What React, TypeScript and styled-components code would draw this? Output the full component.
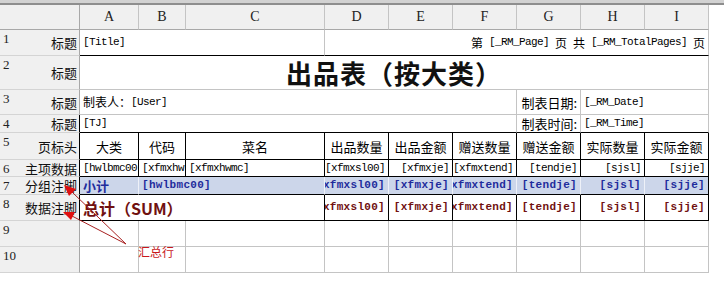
import React from 'react';
import styled, { createGlobalStyle, css } from 'styled-components';

const GlobalStyle = createGlobalStyle`
  html, body {
    margin: 0;
    padding: 0;
    background: #fff;
  }
  body {
    font-family: "Noto Sans CJK SC", "Liberation Sans", sans-serif;
    color: #000;
  }
`;

const GRID = '#c4c4c4';
const INK = '#000';
const HEAD_BG = '#f0f0f0';

// Page shell
const Page = styled.div`
  position: relative;
  width: 724px;
  height: 285px;
  overflow: hidden;
`;

const TopBar = styled.div`
  height: 3px;
  background: #d2d2d2;
  border-bottom: 2px solid #8e8e8e;
`;

const Sheet = styled.div`
  display: grid;
  width: 709px;
  grid-template-columns: 80px 59px 47px 139px repeat(6, 64px);
  grid-template-rows: 25px 26px 34px 25px 18px 27px 17px 18px 26px 26px 26px;
`;

// Header cells
const Corner = styled.div`
  box-sizing: border-box;
  background: ${HEAD_BG};
  border-right: 1px solid #a8a8a8;
  border-bottom: 1px solid #a8a8a8;
`;

const ColHead = styled.div`
  box-sizing: border-box;
  display: flex;
  align-items: center;
  justify-content: center;
  background: ${HEAD_BG};
  border-right: 1px solid ${GRID};
  border-bottom: 1px solid #a8a8a8;
  font-family: "Liberation Serif", serif;
  font-size: 14px;
  color: #222;
`;

const RowHead = styled.div<{ $strong?: boolean }>`
  box-sizing: border-box;
  position: relative;
  display: flex;
  align-items: center;
  justify-content: flex-end;
  padding-right: 2px;
  background: ${HEAD_BG};
  border-right: 1px solid ${(p) => (p.$strong ? INK : '#a8a8a8')};
  border-bottom: 1px solid #d4d4d4;
  font-size: 13px;
  line-height: 1;
  color: #111;
`;

const RowNum = styled.span`
  position: absolute;
  left: 3px;
  top: 2px;
  font-family: "Liberation Serif", serif;
  font-size: 13px;
  color: #222;
`;

// Body cells
type Align = 'left' | 'right' | 'center';

const Cell = styled.div<{
  $span?: number;
  $align?: Align;
  $right?: string;
  $bottom?: string;
  $bg?: string;
  $open?: boolean;
}>`
  box-sizing: border-box;
  display: flex;
  align-items: center;
  justify-content: ${(p) =>
    p.$align === 'right' ? 'flex-end' : p.$align === 'center' ? 'center' : 'flex-start'};
  grid-column: span ${(p) => p.$span ?? 1};
  padding: 0 3px;
  overflow: ${(p) => (p.$open ? 'visible' : 'hidden')};
  white-space: nowrap;
  line-height: 1;
  background: ${(p) => p.$bg ?? '#fff'};
  border-right: 1px solid ${(p) => p.$right ?? GRID};
  border-bottom: 1px solid ${(p) => p.$bottom ?? GRID};
  font-size: 13px;
`;

const Code = styled.span<{ $tone?: 'plain' | 'blue' | 'red' }>`
  flex-shrink: 0;
  font-family: "Liberation Mono", "DejaVu Sans Mono", monospace;
  font-size: 11px;
  letter-spacing: -0.6px;
  color: #000;
  ${(p) =>
    p.$tone === 'blue' &&
    css`
      font-weight: 700;
      letter-spacing: 0.3px;
      color: #1f2c9c;
    `}
  ${(p) =>
    p.$tone === 'red' &&
    css`
      font-weight: 700;
      letter-spacing: 0.3px;
      color: #701010;
    `}
`;

const Han = styled.span`
  font-family: "Noto Sans CJK SC", sans-serif;
  font-size: 12px;
`;

const SheetTitle = styled.span`
  font-family: "Noto Sans CJK SC", sans-serif;
  font-size: 26px;
  font-weight: 700;
  line-height: 1;
  letter-spacing: 1px;
  color: #111;
`;

const SubTotal = styled.span`
  font-weight: 700;
  color: #1f2c9c;
`;

const GrandTotal = styled.span`
  font-size: 16px;
  font-weight: 700;
  line-height: 1;
  color: #701010;
`;

// Annotation over the sheet
const Callout = styled.svg`
  position: absolute;
  left: 0;
  top: 0;
  pointer-events: none;
`;

const CalloutText = styled.span`
  position: absolute;
  left: 138px;
  top: 243px;
  font-size: 12px;
  color: #c8181c;
`;

const COLS = ['A', 'B', 'C', 'D', 'E', 'F', 'G', 'H', 'I'];
const HEADS = ['大类', '代码', '菜名', '出品数量', '出品金额', '赠送数量', '赠送金额', '实际数量', '实际金额'];
const FIELDS = ['[xfmxsl00]', '[xfmxje]', '[xfmxtend]', '[tendje]', '[sjsl]', '[sjje]'];

const App: React.FC = () => {
  return (
    <Page>
      <GlobalStyle />
      <TopBar />
      <Sheet>
        <Corner />
        {COLS.map((c) => (
          <ColHead key={c}>{c}</ColHead>
        ))}

        {/* row 1 */}
        <RowHead><RowNum>1</RowNum>标题</RowHead>
        <Cell $span={3} $bottom={INK}><Code>[Title]</Code></Cell>
        <Cell $span={6} $align="right" $bottom={INK}>
          <Han>第</Han><Code>&nbsp;[_RM_Page]&nbsp;</Code><Han>页</Han>
          <Code>&nbsp;</Code><Han>共</Han><Code>&nbsp;[_RM_TotalPages]&nbsp;</Code><Han>页</Han>
        </Cell>

        {/* row 2 */}
        <RowHead><RowNum>2</RowNum>标题</RowHead>
        <Cell $span={9} $align="center" $open>
          <SheetTitle>出品表（按大类）</SheetTitle>
        </Cell>

        {/* row 3 */}
        <RowHead><RowNum>3</RowNum>标题</RowHead>
        <Cell $span={6}><Han>制表人：</Han><Code>[User]</Code></Cell>
        <Cell $align="right">制表日期:</Cell>
        <Cell $span={2}><Code>[_RM_Date]</Code></Cell>

        {/* row 4 */}
        <RowHead $strong><RowNum>4</RowNum>标题</RowHead>
        <Cell $span={6} $bottom={INK}><Code>[TJ]</Code></Cell>
        <Cell $align="right" $bottom={INK}>制表时间:</Cell>
        <Cell $span={2} $bottom={INK}><Code>[_RM_Time]</Code></Cell>

        {/* row 5: column captions */}
        <RowHead $strong><RowNum>5</RowNum>页标头</RowHead>
        {HEADS.map((h) => (
          <Cell key={h} $align="center" $right={INK} $bottom={INK}>{h}</Cell>
        ))}

        {/* row 6: detail fields */}
        <RowHead $strong><RowNum>6</RowNum>主项数据</RowHead>
        <Cell $right={INK} $bottom={INK}><Code>[hwlbmc00]</Code></Cell>
        <Cell $right={INK} $bottom={INK}><Code>[xfmxhw]</Code></Cell>
        <Cell $right={INK} $bottom={INK}><Code>[xfmxhwmc]</Code></Cell>
        {FIELDS.map((f) => (
          <Cell key={f} $align="right" $right={INK} $bottom={INK}><Code>{f}</Code></Cell>
        ))}

        {/* row 7: group footer */}
        <RowHead $strong><RowNum>7</RowNum>分组注脚</RowHead>
        <Cell $bg="#ccd6ea" $right="#eef1f8" $bottom={INK}><SubTotal>小计</SubTotal></Cell>
        <Cell $span={2} $bg="#ccd6ea" $right="#eef1f8" $bottom={INK}>
          <Code $tone="blue">[hwlbmc00]</Code>
        </Cell>
        {FIELDS.map((f, i) => (
          <Cell
            key={f}
            $align="right"
            $bg="#ccd6ea"
            $right={i === FIELDS.length - 1 ? INK : '#eef1f8'}
            $bottom={INK}
          >
            <Code $tone="blue">{f}</Code>
          </Cell>
        ))}

        {/* row 8: report footer */}
        <RowHead $strong><RowNum>8</RowNum>数据注脚</RowHead>
        <Cell $span={3} $right={INK} $bottom={INK}>
          <GrandTotal>总计（SUM）</GrandTotal>
        </Cell>
        {FIELDS.map((f) => (
          <Cell key={f} $align="right" $right={INK} $bottom={INK}><Code $tone="red">{f}</Code></Cell>
        ))}

        {/* rows 9-10: empty */}
        {[9, 10].map((n) => (
          <React.Fragment key={n}>
            <RowHead><RowNum>{n}</RowNum></RowHead>
            {COLS.map((c) => (
              <Cell key={c} />
            ))}
          </React.Fragment>
        ))}
      </Sheet>

      <Callout width="724" height="285" viewBox="0 0 724 285">
        <g stroke="#a82020" strokeWidth="1" fill="none">
          <line x1="126" y1="244" x2="72" y2="192" />
          <line x1="126" y1="244" x2="72" y2="216" />
        </g>
        <g fill="#e01010">
          <polygon points="64,185 76,189 69,196" />
          <polygon points="63,212 75,212 71,220" />
        </g>
      </Callout>
      <CalloutText>汇总行</CalloutText>
    </Page>
  );
};

export default App;
